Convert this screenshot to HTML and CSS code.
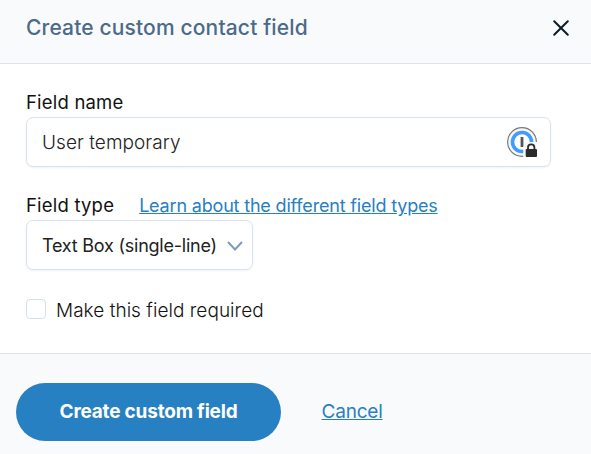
FILE: index.html
```html
<!DOCTYPE html>
<html lang="en">

<head>
  <meta charset="UTF-8">
  <meta name="viewport" content="width=device-width, initial-scale=1.0">
  <title>Create custom contact field</title>
  <link rel="stylesheet" href="styles.css">
</head>

<body>
  <form class="modal">
    <div class="modal-header">
      <h1 class="modal-title">Create custom contact field</h1>
      <button type="button" class="close-btn" aria-label="Close">
        <svg width="18" height="18" viewBox="0 0 18 18" fill="none" stroke="#0b1c26" stroke-width="2" stroke-linecap="round">
          <path d="M2.2 2.2 15.8 15.8M15.8 2.2 2.2 15.8" />
        </svg>
      </button>
    </div>

    <div class="modal-body">
      <label class="label" for="field-name">Field name</label>
      <div class="input-wrapper">
        <input type="text" id="field-name" class="input" value="User temporary">
        <svg class="key-icon" width="32" height="32" viewBox="0 0 32 32" fill="none">
          <circle cx="15" cy="15" r="14.4" fill="#f6f6f6" stroke="#777" stroke-width="1.2" />
          <circle cx="15" cy="15" r="9.5" fill="#fff" stroke="#3f9dfb" stroke-width="3.6" />
          <path d="M15 10v10" stroke="#555" stroke-width="2.8" />
          <path d="M16.500 32V22q0-6.500 5-7H32v17z" fill="#fff" />
          <path d="M16.500 29.400V22q0-6.500 5-7h7.800q1 8-5 13z" fill="#f6f6f6" />
          <path d="M21 23.500v-3a3.200 3.200 0 0 1 6.400 0v3" stroke="#2b2b2b" stroke-width="1.800" />
          <rect x="18.700" y="22" width="11.300" height="8" rx="1" fill="#2b2b2b" />
        </svg>
      </div>

      <div class="label-row">
        <label class="label" for="field-type">Field type</label>
        <a href="#" class="link learn-link">Learn about the different field types</a>
      </div>
      <div class="select-wrapper">
        <select id="field-type" class="select">
          <option>Text Box (single-line)</option>
        </select>
        <svg class="chevron" width="16" height="10" viewBox="0 0 16 10" fill="none" stroke="#809bb9" stroke-width="2">
          <path d="M1 1l7 7.500L15 1" />
        </svg>
      </div>

      <label class="checkbox-row">
        <input type="checkbox" class="checkbox">
        <span class="checkbox-label">Make this field required</span>
      </label>
    </div>

    <div class="modal-footer">
      <button type="submit" class="submit-btn">Create custom field</button>
      <a href="#" class="link cancel-link">Cancel</a>
    </div>
  </form>
</body>

</html>
```
FILE: styles.css
```css
* {
  box-sizing: border-box;
}

body {
  margin: 0;
  background-color: #fff;
  font-family: Inter, "Liberation Sans", sans-serif;
  font-size: 18px;
  color: #111;
  overflow: hidden;
}

.modal {
  display: flex;
  flex-direction: column;
  height: 454px;
}

.modal-header {
  display: flex;
  justify-content: space-between;
  align-items: center;
  height: 64px;
  padding: 0 21px 8px 26px;
  background-color: #f9fafc;
  border-bottom: 1px solid #dfe3e8;
}

.modal-title {
  margin: 0;
  font-size: 21px;
  font-weight: 450;
  line-height: 30px;
  letter-spacing: 0.15px;
  color: #4c6a89;
}

.close-btn {
  display: flex;
  padding: 0;
  border: none;
  background: none;
  cursor: pointer;
}

.modal-body {
  flex: 1;
  padding: 25px 40px 0 26px;
}

.label {
  display: block;
  margin-bottom: 1px;
  font-size: 18.5px;
  line-height: 27px;
  letter-spacing: 0.2px;
}

.input-wrapper {
  position: relative;
}

.input,
.select {
  display: block;
  width: 100%;
  height: 50px;
  padding: 0 15px;
  border: 1px solid #d9e3ef;
  border-radius: 7px;
  background-color: #fff;
  box-shadow: 0 1px 2px rgba(60, 90, 130, 0.08);
  font-family: inherit;
  font-size: 18px;
  color: #222;
  appearance: none;
  outline: none;
}

.input {
  font-size: 19px;
  font-weight: 300;
  letter-spacing: 0.06px;
}

.select {
  letter-spacing: -0.23px;
}

.key-icon {
  position: absolute;
  top: 10px;
  right: 12px;
}

.label-row {
  display: flex;
  gap: 25px;
  margin-top: 25px;
}

.link {
  color: #2780c2;
  text-decoration: underline;
}

.learn-link {
  line-height: 27px;
  letter-spacing: -0.18px;
}

.select-wrapper {
  position: relative;
  width: 227px;
}

.chevron {
  position: absolute;
  top: 21px;
  right: 10px;
  pointer-events: none;
}

.checkbox-row {
  display: flex;
  align-items: flex-start;
  gap: 10px;
  margin-top: 29px;
}

.checkbox {
  width: 20px;
  height: 20px;
  margin: 0;
  border: 1px solid #d3e0f0;
  border-radius: 4px;
  background-color: #fff;
  appearance: none;
}

.checkbox-label {
  font-size: 19px;
  font-weight: 300;
  line-height: 23px;
  letter-spacing: 0.04px;
}

.modal-footer {
  display: flex;
  align-items: center;
  gap: 40.5px;
  height: 101px;
  padding: 15px 16px 0;
  background-color: #f9fafc;
  border-top: 1px solid #dfe3e8;
}

.submit-btn {
  width: 265px;
  height: 58px;
  border: none;
  border-radius: 29px;
  background-color: #2780c2;
  font-family: inherit;
  font-size: 19px;
  font-weight: 700;
  letter-spacing: -0.2px;
  color: #fff;
  cursor: pointer;
}

.cancel-link {
  font-size: 19px;
  letter-spacing: -0.2px;
}
```
